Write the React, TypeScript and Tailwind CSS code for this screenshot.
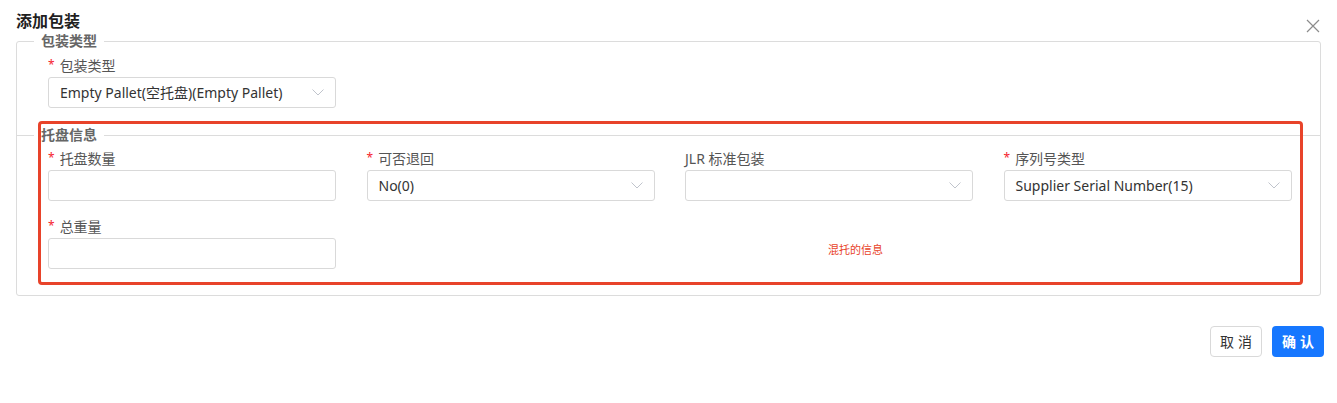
import React from "react"

const font = { fontFamily: '"Noto Sans", "Noto Sans CJK SC", sans-serif' }

const Chevron = () => (
  <svg width="12" height="7" viewBox="0 0 12 7" fill="none" className="shrink-0">
    <path d="M0.5 0.5L6 6L11.5 0.5" stroke="#c0c4cc" strokeWidth="1" />
  </svg>
)

const Label = ({ text, required = true }: { text: string; required?: boolean }) => (
  <div className="flex items-center h-[22px] text-[14px] text-[#555]">
    {required && <span className="text-[#f5222d] mr-[5px] text-[12px]">*</span>}
    {text}
  </div>
)

const Select = ({ value }: { value?: string }) => (
  <div className="flex items-center justify-between h-[31px] w-[288px] border border-[#d9d9d9] rounded-[3px] pl-[11px] pr-[11px] text-[14px] text-[#333]">
    <span>{value}</span>
    <Chevron />
  </div>
)

const Input = () => <div className="h-[31px] w-[288px] border border-[#d9d9d9] rounded-[3px]" />

const App = () => {
  return (
    <div className="relative w-[1337px] h-[403px] bg-white" style={font}>
      <div className="flex items-center justify-between pl-4 pr-[17px] pt-[10px] h-[31px]">
        <h2 className="text-[16px] font-bold text-[#1f1f1f] leading-[22px]">添加包装</h2>
        <svg width="14" height="14" viewBox="0 0 14 14" className="mt-[10px]">
          <path d="M1 1L13 13M13 1L1 13" stroke="#8c8c8c" strokeWidth="1.2" />
        </svg>
      </div>

      <fieldset className="mx-4 border border-[#dcdcdc] rounded-[3px] pb-[26px]">
        <legend className="ml-[17px] px-[7px] text-[14px] font-bold text-[#666] leading-[20px]">包装类型</legend>
        <div className="px-[31px] pt-[3px]">
          <Label text="包装类型" />
          <div className="mt-[1px]">
            <Select value="Empty Pallet(空托盘)(Empty Pallet)" />
          </div>
        </div>

        <fieldset className="mt-[17px] border-t border-[#dcdcdc]">
          <legend className="ml-[17px] px-[7px] text-[14px] font-bold text-[#666] leading-[20px]">托盘信息</legend>
          <div className="pl-[31px] pt-[2px] grid grid-cols-[288px_288px_288px_288px] gap-x-[30.5px]">
            <div>
              <Label text="托盘数量" />
              <div className="mt-[1px]"><Input /></div>
            </div>
            <div>
              <Label text="可否退回" />
              <div className="mt-[1px]"><Select value="No(0)" /></div>
            </div>
            <div>
              <Label text="JLR 标准包装" required={false} />
              <div className="mt-[1px]"><Select /></div>
            </div>
            <div>
              <Label text="序列号类型" />
              <div className="mt-[1px]"><Select value="Supplier Serial Number(15)" /></div>
            </div>
            <div className="mt-[14px]">
              <Label text="总重量" />
              <div className="mt-[1px]"><Input /></div>
            </div>
          </div>
        </fieldset>
      </fieldset>

      <div className="flex justify-end gap-[10px] pr-[13px] mt-[30px]">
        <button className="h-[31px] w-[52px] border border-[#d9d9d9] rounded-[4px] text-[14px] text-[#333] tracking-[4px] pl-[4px]">取消</button>
        <button className="h-[31px] w-[52px] rounded-[4px] bg-[#1677ff] text-[14px] text-white font-bold tracking-[4px] pl-[4px]">确认</button>
      </div>

      {/* annotation overlay */}
      <div className="absolute left-[38px] top-[121px] w-[1265px] h-[164px] border-[3px] border-[#e8432a] rounded-[4px] pointer-events-none" />
      <div className="absolute left-[828px] top-[242px] text-[11px] text-[#e8432a] leading-[16px]">混托的信息</div>
    </div>
  )
}

export default App
